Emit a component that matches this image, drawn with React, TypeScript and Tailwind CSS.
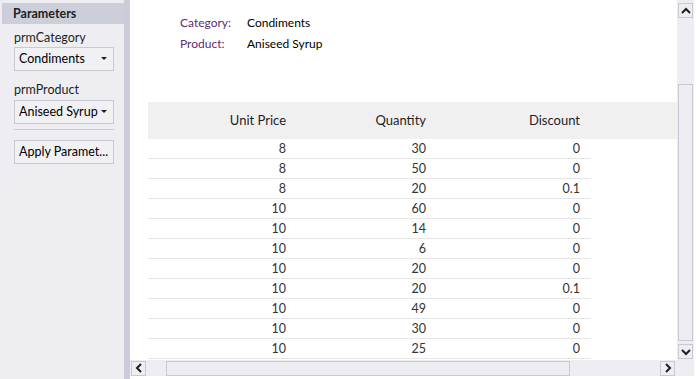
import React from "react";

const rows = [
  [8, 30, 0],
  [8, 50, 0],
  [8, 20, 0.1],
  [10, 60, 0],
  [10, 14, 0],
  [10, 6, 0],
  [10, 20, 0],
  [10, 20, 0.1],
  [10, 49, 0],
  [10, 30, 0],
  [10, 25, 0],
];

function Chevron({ dir }: { dir: "up" | "down" | "left" | "right" }) {
  const pts = {
    up: "2,8 6,4 10,8",
    down: "2,4 6,8 10,4",
    left: "8,2 4,6 8,10",
    right: "4,2 8,6 4,10",
  }[dir];
  return (
    <svg width="12" height="12" viewBox="0 0 12 12">
      <polyline points={pts} fill="none" stroke="#1e1e1e" strokeWidth="2" />
    </svg>
  );
}

function Select({ value }: { value: string }) {
  return (
    <div className="flex items-center h-[24px] w-[100px] border border-[#cacad4] bg-[#f1f1f4] pl-[4px] text-[12.5px] text-black whitespace-nowrap">
      <span className="flex-1 overflow-hidden">{value}</span>
      <svg width="6" height="4" viewBox="0 0 6 4" className="ml-[3px] mr-[6px] shrink-0">
        <polygon points="0,0 6,0 3,3" fill="#1e1e1e" />
      </svg>
    </div>
  );
}

export default function App() {
  return (
    <div
      className="w-[700px] h-[379px] flex bg-white overflow-hidden"
      style={{ fontFamily: 'Lato, "Noto Sans", sans-serif' }}
    >
      {/* Parameters panel */}
      <aside className="w-[124px] bg-[#eeeef2] pt-[3px] pl-[2px] shrink-0">
        <div className="h-[21px] bg-[#ccced9] pl-[11px] text-[12.5px] font-bold leading-[21px] text-[#1e1e1e]">
          Parameters
        </div>
        <div className="pl-[12px] pt-[6px]">
          <div className="text-[12.5px] leading-[16px] text-[#1e1e1e]">prmCategory</div>
          <div className="mt-[1px]">
            <Select value="Condiments" />
          </div>
          <div className="mt-[11px] text-[12.5px] leading-[16px] text-[#1e1e1e]">prmProduct</div>
          <div className="mt-[2px]">
            <Select value="Aniseed Syrup" />
          </div>
          <div className="mt-[5px] w-[100px] h-px bg-[#cacad4]" />
          <div className="mt-[10px] h-[24px] w-[100px] border border-[#cacad4] bg-[#f1f1f4] pl-[4px] text-[12.5px] leading-[22px] text-black whitespace-nowrap">
            Apply Paramet...
          </div>
        </div>
      </aside>
      <div className="w-[6px] bg-[#cbcbd9] shrink-0" />

      {/* Report area */}
      <div className="flex flex-col w-[570px]">
        <div className="flex h-[360px]">
          <div className="w-[547px] overflow-hidden">
            <div className="pl-[50px] pt-[12px] text-[12px] leading-[21px]">
              <div className="flex">
                <span className="w-[67px] text-[#5b2e72]">Category:</span>
                <span className="text-black">Condiments</span>
              </div>
              <div className="flex">
                <span className="w-[67px] text-[#5b2e72]">Product:</span>
                <span className="text-black">Aniseed Syrup</span>
              </div>
            </div>
            <div className="ml-[18px] mt-[48px]">
              <div className="flex h-[37px] items-center bg-[#f0f0f0] text-[13px] text-[#1e1e1e]">
                <div className="w-[142px] pr-[4px] text-right">Unit Price</div>
                <div className="w-[140px] pr-[4px] text-right">Quantity</div>
                <div className="w-[161px] pr-[11px] text-right">Discount</div>
              </div>
              {rows.map((r, i) => (
                <div
                  key={i}
                  className="flex w-[443px] h-[20px] items-center pt-[2px] border-b border-[#e6e6e6] text-[12.5px] text-[#333]"
                >
                  <div className="w-[142px] pr-[4px] text-right">{r[0]}</div>
                  <div className="w-[140px] pr-[4px] text-right">{r[1]}</div>
                  <div className="w-[161px] pr-[11px] text-right">{r[2]}</div>
                </div>
              ))}
            </div>
          </div>
          {/* vertical scrollbar */}
          <div className="w-[17px] bg-[#eeeef2] flex flex-col items-center pt-[3px] pb-[1px]">
            <div className="w-[15px] h-[15px] border border-[#c9c9d5] flex items-center justify-center">
              <Chevron dir="up" />
            </div>
            <div className="mt-[66px] w-[15px] flex-1 border border-[#c9c9d5]" />
            <div className="mt-[3px] w-[15px] h-[15px] border border-[#c9c9d5] flex items-center justify-center">
              <Chevron dir="down" />
            </div>
          </div>
        </div>
        {/* horizontal scrollbar */}
        <div className="flex h-[16px] w-[564px] bg-[#eeeef2] items-center pl-[1px]">
          <div className="w-[15px] h-[15px] border border-[#c9c9d5] flex items-center justify-center">
            <Chevron dir="left" />
          </div>
          <div className="ml-[20px] w-[404px] h-[15px] border border-[#c9c9d5]" />
          <div className="ml-[90px] w-[15px] h-[15px] border border-[#c9c9d5] flex items-center justify-center">
            <Chevron dir="right" />
          </div>
        </div>
      </div>
    </div>
  );
}
